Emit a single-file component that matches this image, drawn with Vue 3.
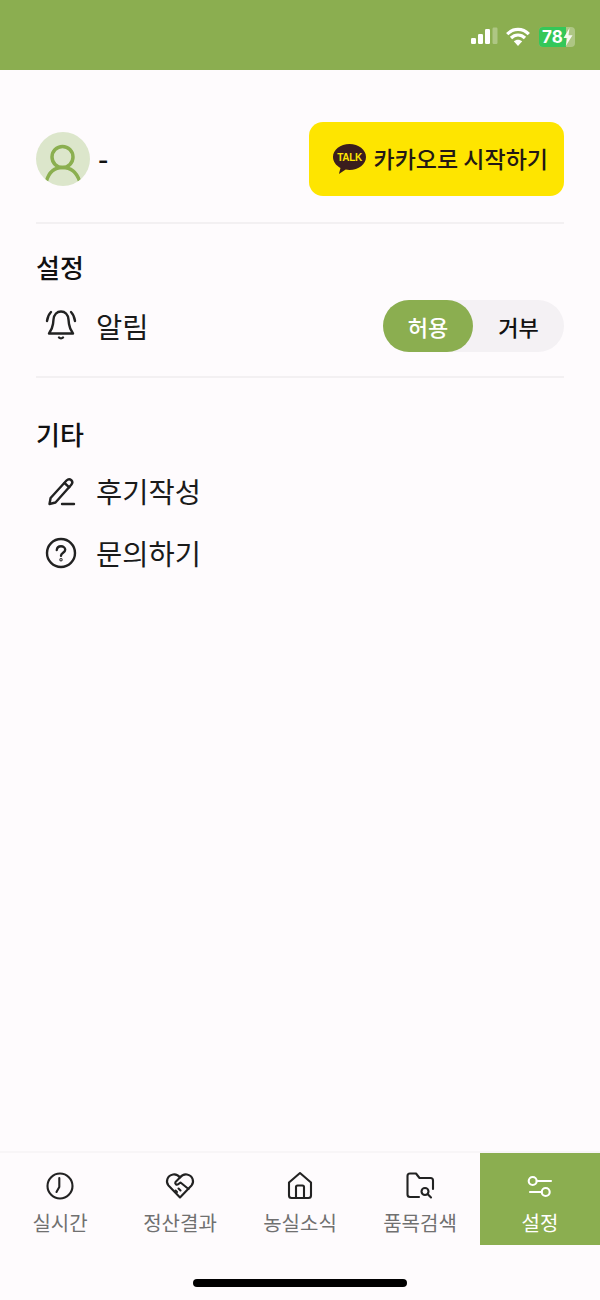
<template>
  <div class="page">
    <div class="status">
      <svg class="signal" width="28" height="18" viewBox="0 0 28 18">
        <rect x="1" y="11" width="5" height="6" rx="1.2" fill="#fff" />
        <rect x="8" y="7" width="5" height="10" rx="1.2" fill="#fff" />
        <rect x="15" y="2" width="5" height="15" rx="1.2" fill="#fff" />
        <rect x="22.500" y="0.500" width="5" height="16.500" rx="1.2" fill="#fff" opacity="0.3" />
      </svg>
      <svg class="wifi" width="24" height="19" viewBox="0 0 24 19">
        <path d="M1.200 7.200C7.300 0.800 16.700 0.800 22.800 7.200M5 11C9 7 15 7 19 11" fill="none" stroke="#fff" stroke-width="3.200" />
        <path d="M12 19L7.800 14.300C10.300 12.200 13.700 12.200 16.200 14.300Z" fill="#fff" />
      </svg>
      <div class="battery">
        <span class="batteryFill">78</span>
        <svg class="bolt" width="10" height="18" viewBox="0 0 10 18">
          <path d="M6.500 0L0.500 10H4.300L2.800 18L9.500 7.300H5.500Z" fill="#fff" opacity="0.9" />
        </svg>
      </div>
    </div>

    <div class="content">
      <div class="profile">
        <div class="user">
          <div class="avatar">
            <svg width="54" height="54" viewBox="0 0 54 54">
              <circle cx="26.500" cy="25" r="10.500" fill="none" stroke="#8BAF50" stroke-width="3.500" />
              <path d="M10.500 49C13 40 19 35.500 26.500 35.500C34 35.500 40.500 40 43.500 49" fill="none" stroke="#8BAF50" stroke-width="3.500" />
            </svg>
          </div>
          <span class="userName">-</span>
        </div>
        <button class="kakao">
          <svg width="35" height="31" viewBox="0 0 35 31">
            <path d="M17.500 1C8.400 1 1 6.800 1 14C1 18.600 4 22.600 8.500 24.900L6.900 31L13.700 26.500C14.900 26.800 16.200 27 17.500 27C26.600 27 34 21.200 34 14C34 6.800 26.600 1 17.500 1Z" fill="#3A1D1D" />
            <text x="17.500" y="17.800" text-anchor="middle" class="talk">TALK</text>
          </svg>
          <span>카카오로 시작하기</span>
        </button>
      </div>

      <div class="section first">
        <h2>설정</h2>
        <div class="row">
          <div class="rowLeft">
            <svg class="icon" width="36" height="36" viewBox="0 0 36 36" fill="none" stroke="#222" stroke-width="2.400" stroke-linecap="round" stroke-linejoin="round">
              <path d="M6 25.500H30C27.500 22 26.500 20 26 16L25.500 11.500C25 6.500 22 3.500 18 3.500C14 3.500 11 6.500 10.500 11.500L10 16C9.500 20 8.500 22 6 25.500Z" />
              <path d="M16 29.500C17 30.500 19 30.500 20 29.500" />
              <path d="M8 4C6 6 4.500 9 4 13M28 4C30 6 31.500 9 32 13" />
            </svg>
            <span class="rowLabel">알림</span>
          </div>
          <div class="toggle">
            <span class="toggleOn">허용</span>
            <span class="toggleOff">거부</span>
          </div>
        </div>
      </div>

      <div class="section other">
        <h2>기타</h2>
        <div class="row">
          <div class="rowLeft">
            <svg class="icon" width="36" height="36" viewBox="0 0 36 36" fill="none" stroke="#222" stroke-width="2.400" stroke-linecap="round" stroke-linejoin="round">
              <path d="M6.500 31L7.600 25L23.500 7.500C25 6 27 6 28.300 7.200C29.600 8.500 29.600 10.300 28.300 11.800L12.500 29.500Z" />
              <path d="M21.500 10L26.300 14.300" />
              <path d="M19 31H31" />
            </svg>
            <span class="rowLabel">후기작성</span>
          </div>
        </div>
        <div class="row">
          <div class="rowLeft">
            <svg class="icon" width="36" height="36" viewBox="0 0 36 36" fill="none" stroke="#222" stroke-width="2.400" stroke-linecap="round" stroke-linejoin="round">
              <circle cx="18" cy="18" r="14" />
              <path d="M13.800 15C14 12.500 15.800 11.300 18 11.300C20.400 11.300 22.200 12.800 22.200 14.800C22.200 17.800 18 17.800 18 20.800" />
              <circle cx="18" cy="24.800" r="0.500" />
            </svg>
            <span class="rowLabel">문의하기</span>
          </div>
        </div>
      </div>
    </div>

    <nav class="tabs">
      <div v-for="tab in tabs" :key="tab.label" class="tab" :class="{ active: tab.active }">
        <svg width="32" height="32" viewBox="0 0 32 32" fill="none" :stroke="tab.active ? '#fff' : '#222'" stroke-width="2.100" stroke-linecap="round" stroke-linejoin="round">
          <path v-for="d in tab.paths" :key="d" :d="d" />
          <circle v-for="c in tab.circles" :key="c[0] + '-' + c[1]" :cx="c[0]" :cy="c[1]" :r="c[2]" />
        </svg>
        <span>{{ tab.label }}</span>
      </div>
    </nav>

    <div class="homeBar"></div>
  </div>
</template>

<script setup>
const tabs = [
  {
    label: "실시간",
    circles: [[16, 16, 12.5]],
    paths: ["M15.300 8V17L12.500 22"],
  },
  {
    label: "정산결과",
    paths: [
      "M16 27.500L4.500 15.500C1.500 12 3 5.500 9 4.500C12 4 14.500 5.500 16 7.500C17.500 5.500 20 4 23 4.500C29 5.500 30.500 12 27.500 15.500Z",
      "M16 7.500L11.500 12C10.500 13.500 12.500 15.500 14 14.300L16.500 12.500L24.500 19",
      "M11.500 20.500L13 22M14.500 18.500L16.500 20.500",
    ],
  },
  {
    label: "농실소식",
    paths: [
      "M5 12.500L16 3L27 12.500V25.500C27 27 26 28 24.500 28H7.500C6 28 5 27 5 25.500Z",
      "M12 28V17C12 16 12.500 15.500 13.500 15.500H18.500C19.500 15.500 20 16 20 17V28",
    ],
  },
  {
    label: "품목검색",
    circles: [[21, 21.5, 3.5]],
    paths: [
      "M15 27H6C4.500 27 3.500 26 3.500 24.500V6C3.500 4.500 4.500 3.500 6 3.500H12L15.500 8H26.500C28 8 29 9 29 10.500V19",
      "M23.800 24.200L27 27.500",
    ],
  },
  {
    label: "설정",
    active: true,
    circles: [[8.7, 11, 4], [21.7, 22, 4]],
    paths: ["M12.700 11H27", "M6 22H17.700"],
  },
];
</script>

<style>
body {
  margin: 0;
  background: #fefbfd;
}
</style>

<style scoped>
.page {
  position: relative;
  width: 600px;
  height: 1300px;
  overflow: hidden;
  background: #fefbfd;
  color: #111;
  font-family: "Noto Sans CJK KR", "Noto Sans", sans-serif;
  display: flex;
  flex-direction: column;
}
.status {
  height: 70px;
  flex-shrink: 0;
  background: #8bae50;
  box-sizing: border-box;
  padding: 27px 25px 0 0;
  display: flex;
  justify-content: flex-end;
  align-items: flex-start;
}
.signal {
  margin-right: 8px;
}
.wifi {
  margin-right: 9px;
}
.battery {
  width: 36px;
  height: 20px;
  display: flex;
  background: rgba(255, 255, 255, 0.3);
  border-radius: 4px;
  overflow: hidden;
  position: relative;
}
.batteryFill {
  width: 24px;
  background: #34c759;
  color: #fff;
  font-family: "Inter", sans-serif;
  font-weight: 700;
  font-size: 17px;
  line-height: 20px;
  padding-left: 3px;
}
.bolt {
  position: absolute;
  left: 24px;
  top: 1px;
}
.content {
  flex: 1;
  padding: 52px 36px 0;
}
.profile {
  height: 100px;
  display: flex;
  justify-content: space-between;
  align-items: flex-start;
  border-bottom: 2px solid #f3f0f2;
}
.user {
  display: flex;
  align-items: center;
  gap: 8px;
  height: 74px;
}
.avatar {
  width: 54px;
  height: 54px;
  border-radius: 50%;
  background: #dce6cb;
  overflow: hidden;
}
.avatar svg {
  display: block;
}
.userName {
  font-size: 29px;
  font-weight: 500;
  line-height: 1;
  padding-bottom: 4px;
}
.kakao {
  width: 255px;
  height: 74px;
  border: none;
  border-radius: 14px;
  background: #fee500;
  color: #231815;
  font-family: inherit;
  font-size: 23px;
  font-weight: 500;
  display: flex;
  align-items: center;
  justify-content: flex-end;
  gap: 6px;
  padding: 0 16px 2px 0;
}
.kakao svg {
  margin-right: 1px;
}
.talk {
  font-family: "Liberation Sans", sans-serif;
  font-size: 10px;
  font-weight: 700;
  letter-spacing: -0.3px;
  fill: #fee500;
}
.section h2 {
  margin: 0;
  font-size: 26px;
  font-weight: 500;
  line-height: 36px;
}
.first {
  height: 154px;
  box-sizing: border-box;
  border-bottom: 2px solid #f3f0f2;
  padding-top: 25px;
}
.row {
  display: flex;
  justify-content: space-between;
  align-items: center;
  height: 62px;
}
.first .row {
  height: 52px;
  margin-top: 15px;
}
.other {
  padding-top: 38px;
}
.other h2 {
  margin-bottom: 8px;
}
.rowLeft {
  display: flex;
  align-items: center;
  gap: 17px;
  padding-left: 7px;
  font-size: 28.500px;
  font-weight: 400;
  color: #1a1a1a;
}
.rowLabel {
  padding-bottom: 2px;
}
.icon {
  flex-shrink: 0;
}
.toggle {
  width: 181px;
  height: 52px;
  display: flex;
  border-radius: 26px;
  background: #f4f1f4;
  font-size: 22px;
  font-weight: 500;
}
.toggleOn,
.toggleOff {
  display: flex;
  align-items: center;
  justify-content: center;
  border-radius: 26px;
}
.toggleOn {
  width: 90px;
  background: #8bae50;
  color: #fff;
}
.toggleOff {
  flex: 1;
  color: #111;
}
.tabs {
  height: 92px;
  display: grid;
  grid-template-columns: repeat(5, 120px);
  border-top: 2px solid #f8f5f7;
  margin-bottom: 55px;
  flex-shrink: 0;
}
.tab {
  display: flex;
  flex-direction: column;
  align-items: center;
  padding-top: 17px;
  box-sizing: border-box;
  color: #707070;
  font-size: 20px;
  font-weight: 400;
  line-height: 28px;
}
.tab svg {
  display: block;
  margin-bottom: 7px;
}
.tab.active {
  background: #8bae50;
  color: #fff;
}
.homeBar {
  position: absolute;
  left: 193px;
  bottom: 13px;
  width: 214px;
  height: 8px;
  border-radius: 4px;
  background: #000;
}
</style>
